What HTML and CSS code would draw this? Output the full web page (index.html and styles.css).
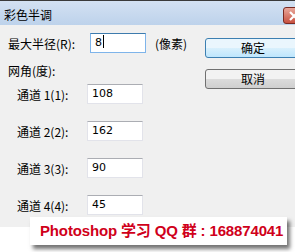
FILE: index.html
```html
<!DOCTYPE html>
<html lang="zh-CN">

<head>
    <meta charset="UTF-8">
    <title>彩色半调</title>
    <link rel="stylesheet" href="styles.css">
</head>

<body>
    <div class="dialog">
        <div class="titlebar">
            <span class="title">彩色半调</span>
            <span class="close">
                <svg width="12" height="10" viewBox="0 0 12 10">
                    <path d="M2 1 L10 9 M10 1 L2 9" stroke="white" stroke-width="2.2" fill="none" />
                </svg>
            </span>
        </div>
        <div class="content">
            <div class="fields">
                <div class="row">
                    <label class="label-main">最大半径(R):</label>
                    <div class="input focus">8<span class="caret"></span></div>
                    <span class="unit">(像素)</span>
                </div>
                <div class="group">网角(度):</div>
                <div class="channels">
                    <div class="row">
                        <label class="label-ch">通道 1(1):</label>
                        <div class="input">108</div>
                    </div>
                    <div class="row">
                        <label class="label-ch">通道 2(2):</label>
                        <div class="input">162</div>
                    </div>
                    <div class="row">
                        <label class="label-ch">通道 3(3):</label>
                        <div class="input">90</div>
                    </div>
                    <div class="row">
                        <label class="label-ch">通道 4(4):</label>
                        <div class="input">45</div>
                    </div>
                </div>
            </div>
            <div class="buttons">
                <button class="btn default">确定</button>
                <button class="btn">取消</button>
            </div>
        </div>
    </div>
    <div class="banner">Photoshop 学习 QQ 群 : 168874041</div>
</body>

</html>
```

FILE: styles.css
```css
* {
    box-sizing: border-box;
    margin: 0;
    padding: 0;
}

body {
    width: 295px;
    height: 252px;
    overflow: hidden;
    background-color: white;
    font-family: "Noto Sans CJK SC", sans-serif;
    font-size: 12px;
    color: black;
    position: relative;
}

.dialog {
    height: 227px;
    background-color: #f0f0f0;
    overflow: hidden;
}

.titlebar {
    height: 25px;
    border-top: 1px solid #3a3a3a;
    background: linear-gradient(#d3e1f2, #bdd2eb);
    display: flex;
    align-items: center;
    padding-left: 4px;
    position: relative;
}

.title {
    font-size: 12px;
    line-height: 14px;
    margin-top: 3px;
}

.close {
    position: absolute;
    left: 283px;
    top: 6px;
    width: 22px;
    height: 17px;
    border: 1px solid #7a2a22;
    border-radius: 3px;
    background: linear-gradient(#e9a89c, #c8503f);
    display: flex;
    align-items: center;
    padding-left: 4px;
}

.content {
    display: flex;
    padding: 8px 0 0 8px;
}

.fields {
    width: 197px;
    flex-shrink: 0;
}

.row {
    display: flex;
    align-items: center;
    height: 20px;
}

.label-main {
    width: 82px;
}

.unit {
    margin-left: 9px;
}

.group {
    margin-top: 10px;
    height: 16px;
    line-height: 16px;
}

.channels {
    margin-top: 5px;
    padding-left: 9px;
    display: flex;
    flex-direction: column;
    gap: 17px;
}

.label-ch {
    width: 70px;
}

.input {
    width: 56px;
    height: 20px;
    background-color: white;
    border: 1px solid #e2e3ea;
    border-top-color: #abadb3;
    font-family: "DejaVu Sans", sans-serif;
    font-size: 11px;
    line-height: 18px;
    padding-left: 4px;
}

.input.focus {
    border-color: #7eb4ea;
    border-top-color: #3d7bad;
}

.caret {
    display: inline-block;
    width: 1px;
    height: 13px;
    background-color: black;
    vertical-align: -2px;
    margin-left: 1px;
}

.buttons {
    display: flex;
    flex-direction: column;
    flex-shrink: 0;
    gap: 11px;
    padding-top: 5px;
}

.btn {
    width: 96px;
    height: 20px;
    border: 1px solid #707070;
    border-radius: 3px;
    background: linear-gradient(#f2f2f2 50%, #dcdcdc 50%, #cfcfcf);
    font-family: "Noto Sans CJK SC", sans-serif;
    font-size: 12px;
    line-height: 16px;
}

.btn.default {
    border-color: #3c7fb1;
    background: linear-gradient(#eaf6fd 50%, #d9f0fc 50%, #bee6fd);
}

.banner {
    position: absolute;
    left: 30px;
    top: 217px;
    width: 257px;
    height: 28px;
    background-color: white;
    box-shadow: 3px 4px 4px rgba(0, 0, 0, .55);
    padding-left: 10px;
    font-family: "Liberation Sans", "Noto Sans CJK SC", sans-serif;
    font-weight: bold;
    font-size: 15px;
    line-height: 28px;
    color: #d0001a;
    white-space: nowrap;
    letter-spacing: -.15px;
}
```
